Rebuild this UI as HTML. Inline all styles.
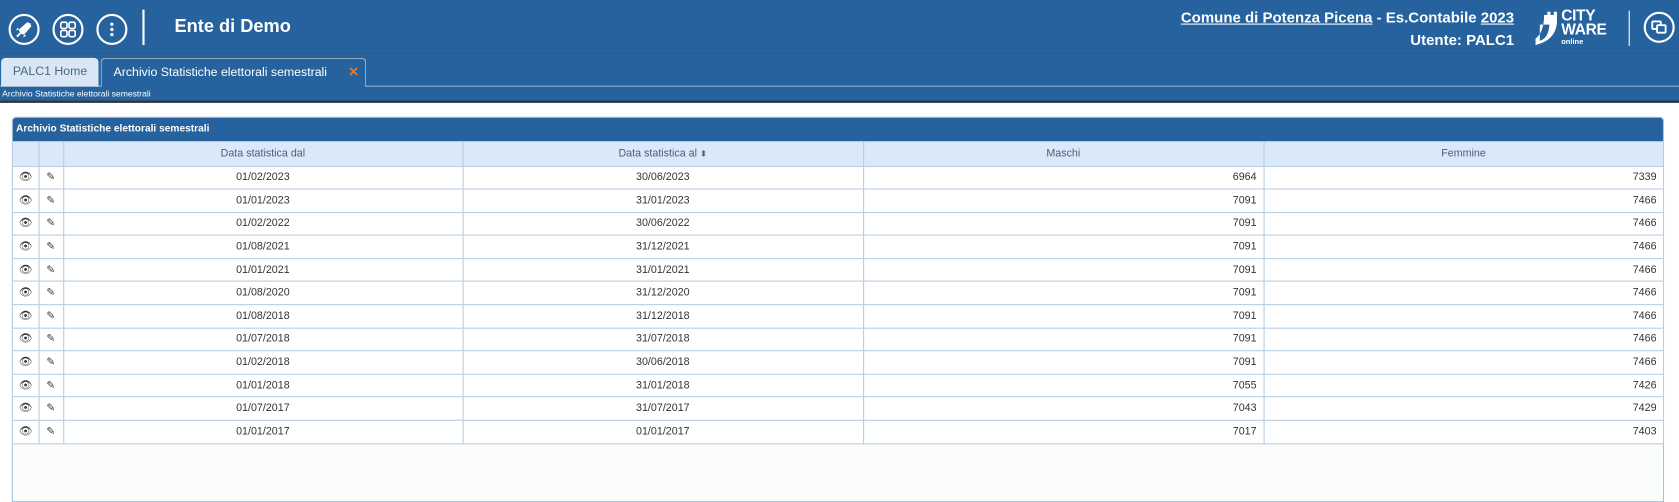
<!DOCTYPE html>
<html><head><meta charset="utf-8"><style>
*{margin:0;padding:0;box-sizing:border-box}
body{width:1679px;height:491px;overflow:hidden;background:#fff;font-family:"Liberation Sans",sans-serif;position:relative}
#w{position:absolute;left:0;top:0;width:1568px;height:459px;transform:scale(1.0708);transform-origin:0 0}
.top{position:absolute;left:0;top:0;width:1568px;height:51px;background:#25629e;border-bottom:1px solid #1d4f82}
.circ{position:absolute;top:13px;width:29px;height:29px;border:2px solid #fff;border-radius:50%;color:#fff}
.tabs{position:absolute;left:0;top:51px;width:1568px;height:30px;background:#25629e;border-bottom:1px solid #9fb6cc}
.tab{position:absolute;top:3px;height:27px;border-radius:4px 4px 0 0;font-size:11.5px;line-height:27px;padding-left:11px;white-space:nowrap}
.bc{position:absolute;left:0;top:81px;width:1568px;height:15px;background:#25629e;border-bottom:2px solid #333;color:#fff;font-size:8px;line-height:13px;padding-left:2px}
.panel{position:absolute;left:11px;top:109px;width:1543px;height:360px;border:1px solid #a7c3db;background:#fbfdfd;border-radius:4px 4px 0 0}
.ph{height:22px;background:#25629e;color:#fff;font-size:9.5px;font-weight:bold;line-height:22px;padding-left:3px;border-radius:3px 3px 0 0}
table{border-collapse:collapse;font-size:10px;color:#333;width:1542px;table-layout:fixed}
th{height:23px;background:#dbe8fa;font-weight:normal;color:#46607a;border:1px solid #b6cde3;border-top:none;padding:0}
td{height:21.6px;background:#fff;border:1px solid #b6cde3;text-align:center;padding:0}
td.r{text-align:right;padding-right:6px}
td:first-child,th:first-child{border-left:none}
</style></head><body><div id="w">
<div class="top">
 <div class="circ" style="left:8px"><svg width="25" height="25" viewBox="0 0 26 26"><path d="M9 17 L8 13 L16 6 L19 7 L20 10 L13 18 Z" fill="#fff"/><path d="M9 17 L6 20" stroke="#fff" stroke-width="2"/><path d="M8 13 L5 14 L7 11Z M13 18 L12 21 L15 19Z" fill="#fff"/></svg></div>
 <div class="circ" style="left:49px"><svg width="25" height="25" viewBox="0 0 26 26" fill="none" stroke="#fff" stroke-width="1.6"><rect x="6" y="6" width="6" height="6" rx="1.5"/><rect x="14" y="6" width="6" height="6" rx="1.5"/><rect x="6" y="14" width="6" height="6" rx="1.5"/><rect x="14" y="14" width="6" height="6" rx="1.5"/></svg></div>
 <div class="circ" style="left:90px"><svg width="25" height="25" viewBox="0 0 26 26" fill="#fff"><circle cx="13" cy="8" r="1.6"/><circle cx="13" cy="13" r="1.6"/><circle cx="13" cy="18" r="1.6"/></svg></div>
 <div style="position:absolute;left:133px;top:9px;width:2px;height:33px;background:#fff"></div>
 <div style="position:absolute;left:163px;top:15px;color:#fff;font-size:17px;font-weight:bold">Ente di Demo</div>
 <div style="position:absolute;right:154px;top:6px;color:#fff;font-size:14px;font-weight:bold;text-align:right;line-height:21px"><u>Comune di Potenza Picena</u> - Es.Contabile <u>2023</u><br>Utente: PALC1</div>
 <svg style="position:absolute;left:1432px;top:10px" width="24" height="34" viewBox="0 0 24 34"><path d="M2 32 L2 26 Q10 20 10 4 L13 4 L13 1 L16 1 L16 4 L19 4 L19 1 L22 1 L22 12 Q20 28 2 32Z M6 28 Q14 26 15 13 L6 13Z" fill="#fff" fill-rule="evenodd"/></svg>
 <div style="position:absolute;left:1458px;top:9px;color:#fff;font-weight:bold;font-size:14.5px;line-height:13px;letter-spacing:-0.3px">CITY<br>WARE<br><span style="font-size:7px;line-height:9px;display:block;letter-spacing:0">online</span></div>
 <div style="position:absolute;left:1521px;top:10px;width:1px;height:33px;background:#fff"></div>
 <div class="circ" style="left:1535px;top:11px"><svg width="25" height="25" viewBox="0 0 25 25" fill="none" stroke="#fff" stroke-width="1.7"><rect x="6" y="7" width="8" height="7" rx="1"/><rect x="10.5" y="10.5" width="8" height="7" rx="1" fill="#25629e"/></svg></div>
</div>
<div class="tabs">
 <div class="tab" style="left:1px;width:91px;background:#d8e6f5;color:#4a6a88">PALC1 Home</div>
 <div class="tab" style="left:94px;width:248px;height:28px;background:#25629e;color:#fff;border:1px solid #9fb6cc;border-bottom:none">Archivio Statistiche elettorali semestrali<span style="position:absolute;right:6px;color:#f07a2a;font-weight:bold">✕</span></div>
</div>
<div class="bc">Archivio Statistiche elettorali semestrali</div>
<div class="panel">
 <div class="ph">Archivio Statistiche elettorali semestrali</div>
 <table>
 <colgroup><col style="width:24px"><col style="width:23px"><col style="width:373px"><col style="width:374px"><col style="width:374px"><col></colgroup>
 <tr><th></th><th></th><th>Data statistica dal</th><th>Data statistica al <span style="font-size:8px">⬍</span></th><th>Maschi</th><th>Femmine</th></tr>
 <tr><td>👁</td><td>✎</td><td>01/02/2023</td><td>30/06/2023</td><td class="r">6964</td><td class="r">7339</td></tr>
 <tr><td>👁</td><td>✎</td><td>01/01/2023</td><td>31/01/2023</td><td class="r">7091</td><td class="r">7466</td></tr>
 <tr><td>👁</td><td>✎</td><td>01/02/2022</td><td>30/06/2022</td><td class="r">7091</td><td class="r">7466</td></tr>
 <tr><td>👁</td><td>✎</td><td>01/08/2021</td><td>31/12/2021</td><td class="r">7091</td><td class="r">7466</td></tr>
 <tr><td>👁</td><td>✎</td><td>01/01/2021</td><td>31/01/2021</td><td class="r">7091</td><td class="r">7466</td></tr>
 <tr><td>👁</td><td>✎</td><td>01/08/2020</td><td>31/12/2020</td><td class="r">7091</td><td class="r">7466</td></tr>
 <tr><td>👁</td><td>✎</td><td>01/08/2018</td><td>31/12/2018</td><td class="r">7091</td><td class="r">7466</td></tr>
 <tr><td>👁</td><td>✎</td><td>01/07/2018</td><td>31/07/2018</td><td class="r">7091</td><td class="r">7466</td></tr>
 <tr><td>👁</td><td>✎</td><td>01/02/2018</td><td>30/06/2018</td><td class="r">7091</td><td class="r">7466</td></tr>
 <tr><td>👁</td><td>✎</td><td>01/01/2018</td><td>31/01/2018</td><td class="r">7055</td><td class="r">7426</td></tr>
 <tr><td>👁</td><td>✎</td><td>01/07/2017</td><td>31/07/2017</td><td class="r">7043</td><td class="r">7429</td></tr>
 <tr><td>👁</td><td>✎</td><td>01/01/2017</td><td>01/01/2017</td><td class="r">7017</td><td class="r">7403</td></tr>
 </table>
</div>
</div></body></html>
